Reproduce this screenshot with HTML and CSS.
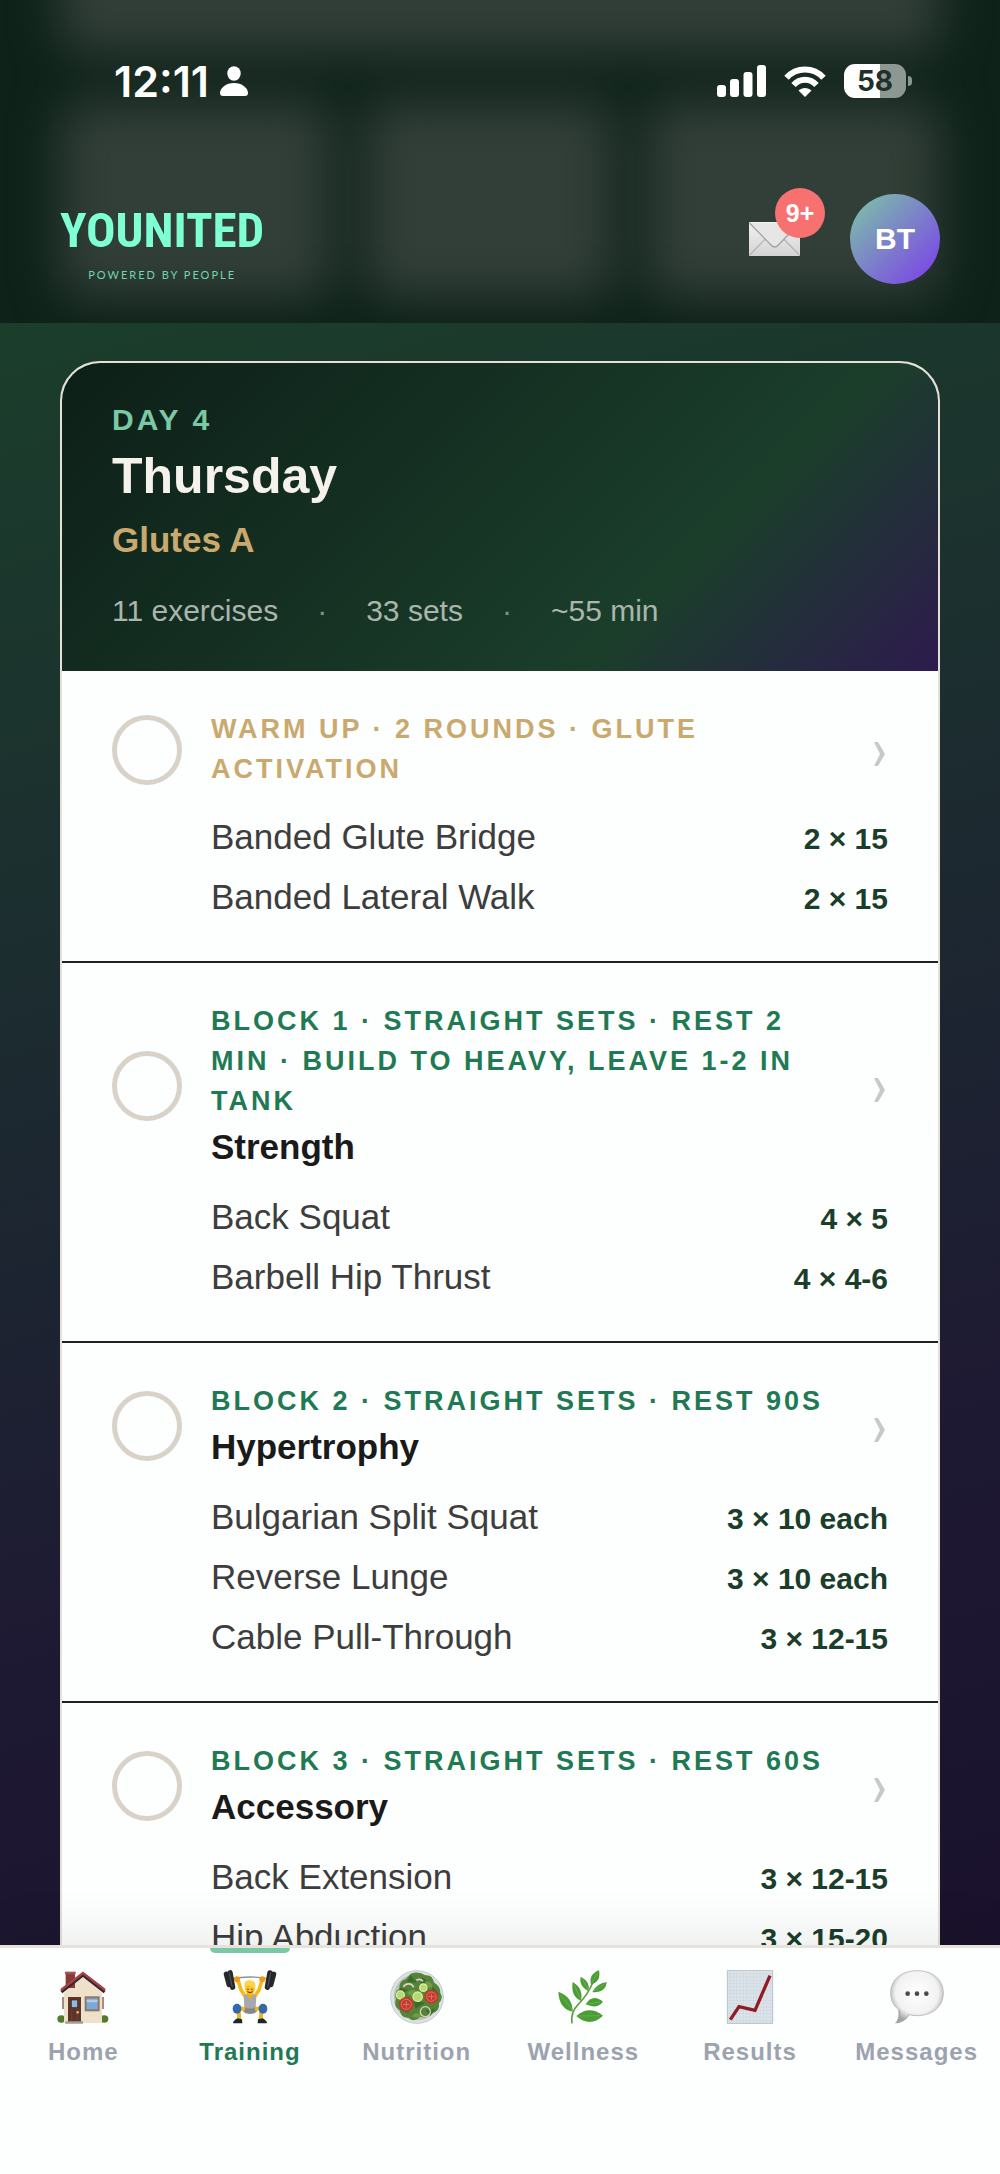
FILE: index.html
```html
<!DOCTYPE html>
<html lang="en">
<head>
    <meta charset="UTF-8">
    <meta name="viewport" content="width=device-width, initial-scale=1.0">
    <title>YOUNITED - Training</title>
    <link rel="stylesheet" href="styles.css">
</head>
<body>
    <header class="top-bar">
        <!-- blurred cards scrolled under the bar -->
        <div class="backdrop" aria-hidden="true">
            <div class="tile wide"></div>
            <div class="tile"></div>
            <div class="tile"></div>
            <div class="tile"></div>
        </div>

        <div class="status-bar">
            <div class="clock">
                <span>12:11</span>
                <svg width="28" height="30" viewBox="0 0 28 30" fill="#fff">
                    <ellipse cx="14" cy="7.5" rx="6.7" ry="7.3"/>
                    <path d="M14 17C6 17 0 22 0 27q0 3 3 3h22q3 0 3-3C28 22 22 17 14 17z"/>
                </svg>
            </div>
            <div class="signals">
                <svg width="49" height="32" viewBox="0 0 49 32" fill="#fff">
                    <rect x="0" y="20" width="9" height="12" rx="3"/>
                    <rect x="13" y="14" width="9" height="18" rx="3"/>
                    <rect x="26.500" y="7" width="9" height="25" rx="3"/>
                    <rect x="40" y="0" width="9" height="32" rx="3"/>
                </svg>
                <svg width="42" height="31" viewBox="0 0 42 31" fill="none" stroke="#fff" stroke-width="6">
                    <path d="M2.500 11.800C12.500 .800 29.500 .800 39.500 11.800"/>
                    <path d="M9.500 19C16 12 26 12 32.500 19"/>
                    <path d="M21 31l-6.500-6.500c3.500-3.400 9.500-3.400 13 0z" fill="#fff" stroke="none"/>
                </svg>
                <div class="battery"><span>58</span></div>
            </div>
        </div>

        <div class="brand-row">
            <a class="logo" href="#">
                <span class="logo-name">YOUNITED</span>
                <span class="logo-tag">POWERED BY PEOPLE</span>
            </a>
            <div class="account">
                <button class="inbox" type="button" aria-label="Inbox">
                    <svg width="51" height="34" viewBox="0 0 153 102">
                        <defs>
                            <linearGradient id="paper" x1="0" y1="0" x2="0" y2="1">
                                <stop offset="0" stop-color="#f1f1f1"/>
                                <stop offset="1" stop-color="#d4d4d4"/>
                            </linearGradient>
                        </defs>
                        <rect width="153" height="102" rx="3" fill="url(#paper)"/>
                        <path d="M3 98L48 52M150 98L105 52" stroke="#b5b5b5" stroke-width="4" fill="none"/>
                        <path d="M2 4L66 69q11 12 22 0L151 4" stroke="#a3a3a3" stroke-width="4" fill="#e6e6e6"/>
                    </svg>
                    <span class="badge">9+</span>
                </button>
                <button class="avatar" type="button">BT</button>
            </div>
        </div>
    </header>

    <main class="content">
        <article class="day-card">
            <div class="day-head">
                <p class="day-number">DAY 4</p>
                <h1>Thursday</h1>
                <p class="focus">Glutes A</p>
                <p class="meta">
                    <span>11 exercises</span>
                    <span class="dot">·</span>
                    <span>33 sets</span>
                    <span class="dot">·</span>
                    <span>~55 min</span>
                </p>
            </div>

            <section class="block warm-up">
                <div class="block-head">
                    <input type="checkbox" id="warmup">
                    <label for="warmup"><span class="block-label">WARM UP · 2 ROUNDS · GLUTE ACTIVATION</span></label>
                    <svg class="chevron" viewBox="0 0 18 24"><path d="M4 0h4l7 12-7 12H4l6-12z"/></svg>
                </div>
                <ul class="exercises">
                    <li>Banded Glute Bridge <b>2 × 15</b></li>
                    <li>Banded Lateral Walk <b>2 × 15</b></li>
                </ul>
            </section>

            <section class="block">
                <div class="block-head">
                    <input type="checkbox" id="block1">
                    <label for="block1">
                        <span class="block-label">BLOCK 1 · STRAIGHT SETS · REST 2 MIN · BUILD TO HEAVY, LEAVE 1-2 IN TANK</span>
                        <span class="block-title">Strength</span>
                    </label>
                    <svg class="chevron" viewBox="0 0 18 24"><path d="M4 0h4l7 12-7 12H4l6-12z"/></svg>
                </div>
                <ul class="exercises">
                    <li>Back Squat <b>4 × 5</b></li>
                    <li>Barbell Hip Thrust <b>4 × 4-6</b></li>
                </ul>
            </section>

            <section class="block">
                <div class="block-head">
                    <input type="checkbox" id="block2">
                    <label for="block2">
                        <span class="block-label">BLOCK 2 · STRAIGHT SETS · REST 90S</span>
                        <span class="block-title">Hypertrophy</span>
                    </label>
                    <svg class="chevron" viewBox="0 0 18 24"><path d="M4 0h4l7 12-7 12H4l6-12z"/></svg>
                </div>
                <ul class="exercises">
                    <li>Bulgarian Split Squat <b>3 × 10 each</b></li>
                    <li>Reverse Lunge <b>3 × 10 each</b></li>
                    <li>Cable Pull-Through <b>3 × 12-15</b></li>
                </ul>
            </section>

            <section class="block">
                <div class="block-head">
                    <input type="checkbox" id="block3">
                    <label for="block3">
                        <span class="block-label">BLOCK 3 · STRAIGHT SETS · REST 60S</span>
                        <span class="block-title">Accessory</span>
                    </label>
                    <svg class="chevron" viewBox="0 0 18 24"><path d="M4 0h4l7 12-7 12H4l6-12z"/></svg>
                </div>
                <ul class="exercises">
                    <li>Back Extension <b>3 × 12-15</b></li>
                    <li>Hip Abduction <b>3 × 15-20</b></li>
                </ul>
            </section>
        </article>
    </main>

    <nav class="tab-bar">
        <a href="#">
            <svg viewBox="0 0 162 162">
                <ellipse cx="16" cy="147" rx="12" ry="11" fill="#557a2c"/>
                <ellipse cx="145" cy="147" rx="12" ry="11" fill="#557a2c"/>
                <path d="M24 68L81 16l57 52v91H24z" fill="#eee1ca"/>
                <rect x="29" y="8" width="28" height="46" fill="#873a38"/>
                <rect x="27" y="5" width="32" height="8" fill="#a35450"/>
                <path d="M16 66L81 15l65 51" fill="none" stroke="#35292d" stroke-width="9"/>
                <path d="M15 60L81 9l66 51" fill="none" stroke="#a64047" stroke-width="7"/>
                <path d="M21 81v36M141 81v36" stroke="#9b7468" stroke-width="5"/>
                <rect x="36" y="81" width="39" height="75" fill="#5c3429"/>
                <rect x="46" y="90" width="19" height="23" fill="#8ebbe4" stroke="#3f261f" stroke-width="2"/>
                <path d="M47 119v34M64 119v34" stroke="#74473a" stroke-width="2"/>
                <circle cx="65" cy="127" r="4" fill="#e5b75d"/>
                <rect x="89" y="82" width="39" height="39" fill="#79a9d6" stroke="#8e7769" stroke-width="6"/>
                <path d="M92 93h33" stroke="#a9cdea" stroke-width="8"/>
                <path d="M29 154h52v7H27z" fill="#a69a9a"/>
            </svg>
            <span>Home</span>
        </a>
        <a class="active" href="#" aria-current="page">
            <svg viewBox="0 0 162 162">
                <path d="M27 26Q81 16 135 26" fill="none" stroke="#8d9297" stroke-width="4"/>
                <g fill="#27282c">
                    <rect x="6" y="4" width="15" height="48" rx="7" transform="rotate(-15 14 27)"/>
                    <rect x="17" y="0" width="16" height="60" rx="8" transform="rotate(-10 25 30)"/>
                    <rect x="141" y="4" width="15" height="48" rx="7" transform="rotate(15 147 27)"/>
                    <rect x="129" y="0" width="16" height="60" rx="8" transform="rotate(10 136 30)"/>
                </g>
                <path d="M19 8l9 44M143 8l-9 44" stroke="#6c6e73" stroke-width="2"/>
                <path d="M45 30L54 60l16 24M117 30l-9 30-16 24" fill="none" stroke="#f5b918" stroke-width="11"/>
                <circle cx="42" cy="28" r="9" fill="#f29b17"/>
                <circle cx="118" cy="28" r="9" fill="#f29b17"/>
                <path d="M62 76q19-9 38 0l-3 54H65z" fill="#a7a8ad"/>
                <path d="M71 74q10 23 20 0v-9H71z" fill="#efad16"/>
                <path d="M63 110q18 11 36 0l4 14q-22 16-44 0z" fill="#85878e"/>
                <path d="M66 118L46 113l3 36M96 118l20-5-3 36" fill="none" stroke="#f1b419" stroke-width="12"/>
                <ellipse cx="42" cy="116" rx="13" ry="15" fill="#3568a9"/>
                <ellipse cx="120" cy="116" rx="13" ry="15" fill="#3568a9"/>
                <ellipse cx="81" cy="54" rx="15" ry="20" fill="#f8bd1d"/>
                <path d="M64 52q-3-20 14-21 19-2 20 18l-2 5q-13-1-20-9-4 6-12 7z" fill="#ffd34e"/>
                <path d="M73 58h4M85 58h4M73 65q8 6 16 0" stroke="#583214" stroke-width="3" fill="none"/>
                <path d="M43 145l14 3 1 12H31q-4-5 12-15zM119 145l-14 3-1 12h27q4-5-12-15z" fill="#1d2732"/>
            </svg>
            <span>Training</span>
        </a>
        <a href="#">
            <svg viewBox="0 0 162 162">
                <circle cx="81" cy="81" r="79" fill="#dce1e4" stroke="#c2c9cc" stroke-width="3"/>
                <circle cx="81" cy="81" r="70" fill="#b9c4bb"/>
                <path d="M62 11q25-9 44 5 22-2 26 22 20 10 19 31 10 16-4 30 3 24-20 31-17 18-36 10-18 20-36 3-23 1-26-22-19-11-11-34-8-20 10-31-1-24 19-28z" fill="#558438"/>
                <path d="M62 16l18 22-30-3zM96 22l23 16-27 2zM127 48l22 27-23-6zM29 53l26 7-28 15zM71 92l35 6-30 18zM28 118l26-9 2 21zM107 121l29-4-15 20z" fill="#376c2c"/>
                <path d="M51 69q21-22 35 4-12 18-35-4zM104 34q22-3 24 18-17 6-24-18zM66 139q11-17 28-3-8 13-28 3z" fill="#6f9d45"/>
                <path d="M40 51a17 17 0 0 1 31 1M79 31q12-7 20 3" fill="none" stroke="#dfcfc7" stroke-width="5"/>
                <g fill="#b4da70" stroke="#dbe9a3" stroke-width="4">
                    <circle cx="31" cy="75" r="12"/>
                    <circle cx="100" cy="53" r="11"/>
                    <circle cx="83" cy="80" r="14"/>
                </g>
                <circle cx="49" cy="103" r="22" fill="#c0392e"/>
                <circle cx="124" cy="80" r="21" fill="#c0392e"/>
                <g fill="none" stroke="#e0755f" stroke-width="3">
                    <circle cx="49" cy="103" r="15"/>
                    <circle cx="124" cy="80" r="14"/>
                    <path d="M49 93v20M39 103h20M124 71v18M115 80h18"/>
                </g>
                <circle cx="106" cy="125" r="15" fill="none" stroke="#ddd0ba" stroke-width="4"/>
            </svg>
            <span>Nutrition</span>
        </a>
        <a href="#">
            <svg viewBox="0 0 162 162">
                <path d="M48 160Q43 127 66 104 94 76 110 39" fill="none" stroke="#5fa044" stroke-width="5"/>
                <g fill="#4b9e37">
                    <path d="M50 125Q9 116 7 65q43 15 43 60z"/>
                    <path d="M75 93Q43 78 50 36q33 19 25 57z"/>
                    <path d="M97 64Q67 46 74 20q31 16 23 44z"/>
                    <path d="M105 44Q97 13 129 1q7 34-24 43z"/>
                    <path d="M109 66q15-27 44-29-7 34-44 29z"/>
                    <path d="M89 103q21-33 52-8-18 24-52 8z"/>
                    <path d="M61 138q38-34 80-1-39 37-80 1z"/>
                </g>
                <g fill="none" stroke="#74b84c" stroke-width="2">
                    <path d="M48 119L12 73M74 87L54 44M96 58L79 28M107 38l18-30M115 62l31-20M95 102l39-6M68 138l64-1"/>
                </g>
            </svg>
            <span>Wellness</span>
        </a>
        <a href="#">
            <svg viewBox="0 0 162 162">
                <defs>
                    <pattern id="graph" width="10" height="10" patternUnits="userSpaceOnUse">
                        <path d="M0 1h10M1 0v10" stroke="#bac9d7" stroke-width="1"/>
                    </pattern>
                </defs>
                <rect x="12" y="1" width="138" height="160" fill="#dce3e9"/>
                <rect x="12" y="1" width="138" height="160" fill="url(#graph)"/>
                <path d="M13 1v159h136V1z" fill="none" stroke="#b8c3cb" stroke-width="3"/>
                <path d="M22 149l26-39 48 11 45-104" fill="none" stroke="#911c25" stroke-width="10"/>
            </svg>
            <span>Results</span>
        </a>
        <a href="#">
            <svg viewBox="0 0 162 162">
                <defs>
                    <radialGradient id="bubble" cx=".5" cy=".42" r=".58">
                        <stop offset="0" stop-color="#fff"/>
                        <stop offset=".7" stop-color="#f2f2f2"/>
                        <stop offset="1" stop-color="#a2a2a2"/>
                    </radialGradient>
                </defs>
                <path d="M25 119q4 26-10 41 28-1 43-25z" fill="#a0a0a0"/>
                <path d="M81 2c48 0 79 27 79 67s-32 68-79 68q-12 0-24-3-11 18-37 25 12-15 9-38C10 108 2 91 2 69 2 29 34 2 81 2z" fill="url(#bubble)" stroke="#a9a9a9" stroke-width="2"/>
                <g fill="#4b4b4b">
                    <circle cx="53" cy="71" r="7"/>
                    <circle cx="81" cy="71" r="7"/>
                    <circle cx="109" cy="71" r="7"/>
                </g>
            </svg>
            <span>Messages</span>
        </a>
    </nav>
</body>
</html>
```

FILE: styles.css
```css
* {
    box-sizing: border-box;
    margin: 0;
    padding: 0;
}
body {
    display: flex;
    flex-direction: column;
    height: 100vh;
    font-family: Arial, "Liberation Sans", sans-serif;
    background: #1a122c;
}
a {
    text-decoration: none;
}
button {
    border: none;
    background: none;
    font-family: inherit;
    cursor: pointer;
}
ul {
    list-style: none;
}

/* header */
.top-bar {
    position: relative;
    flex: none;
    overflow: hidden;
    padding: 60px 60px 39px;
    background: #0e2219;
}
.backdrop {
    position: absolute;
    inset: -60px 60px 26px;
    display: grid;
    grid-template-columns: 12fr 11fr 13fr;
    grid-template-rows: 112px 1fr;
    gap: 50px 34px;
    filter: blur(24px);
}
.tile {
    background: #323f38;
    border-radius: 20px;
}
.tile.wide {
    grid-column: 1 / -1;
}
.status-bar {
    position: relative;
    display: flex;
    justify-content: space-between;
    align-items: center;
    height: 42px;
    padding: 0 34px 0 54px;
    font-family: Inter, sans-serif;
    color: #fff;
}
.clock {
    display: flex;
    align-items: center;
    gap: 11px;
    font-size: 43px;
    font-weight: 600;
}
.signals {
    display: flex;
    align-items: center;
    gap: 18px;
}
.battery {
    position: relative;
    width: 62px;
    height: 34px;
    border-radius: 11px;
    background: linear-gradient(90deg, #fff 58%, #8e9892 58%);
    color: #1f312a;
    font-size: 28px;
    font-weight: 700;
    line-height: 34px;
    text-align: center;
}
.battery::after {
    content: "";
    position: absolute;
    right: -6px;
    top: 12px;
    width: 4px;
    height: 10px;
    border-radius: 0 4px 4px 0;
    background: #8e9892;
}
.brand-row {
    position: relative;
    display: flex;
    justify-content: space-between;
    align-items: center;
    margin-top: 92px;
}
.logo {
    display: flex;
    flex-direction: column;
    align-items: center;
    color: #7fffd4;
}
.logo-name {
    font-family: "Roboto Condensed", "Liberation Sans Narrow", "Liberation Sans", sans-serif;
    font-size: 49px;
    font-weight: 700;
    line-height: 72px;
}
.logo-tag {
    font-family: Lato, sans-serif;
    font-size: 11px;
    line-height: 16px;
    letter-spacing: 2px;
    color: #6fd6b0;
}
.account {
    display: flex;
    align-items: center;
    gap: 50px;
}
.inbox {
    position: relative;
    height: 34px;
}
.inbox svg {
    display: block;
}
.badge {
    position: absolute;
    right: -25px;
    bottom: 18px;
    width: 50px;
    height: 50px;
    border-radius: 50%;
    background: #f87171;
    color: #fff;
    font-size: 25px;
    font-weight: 700;
    line-height: 50px;
    text-align: center;
}
.avatar {
    width: 90px;
    height: 90px;
    border-radius: 50%;
    background: linear-gradient(135deg, #7bc8a4, #7c3aed);
    color: #fff;
    font-size: 30px;
    font-weight: 700;
}

/* training day */
.content {
    flex: 1;
    min-height: 0;
    overflow: hidden;
    padding: 38px 60px 0;
    background: linear-gradient(165deg, #1b3e2b 0%, #1c2b30 38%, #1e1933 72%, #1a122c 100%);
}
.day-card {
    overflow: hidden;
    border: 2px solid #e5e0d6;
    border-radius: 40px;
    background: #fdfefe;
}
.day-head {
    padding: 40px 50px 42px;
    background: linear-gradient(135deg, #0d1f18 0%, #1b3e2b 70%, #2d1b4e 100%);
}
.day-number {
    font-size: 30px;
    font-weight: 700;
    line-height: 34px;
    letter-spacing: 3px;
    color: #7bc8a4;
}
.day-head h1 {
    margin-top: 8px;
    font-size: 50px;
    line-height: 62px;
    color: #f5f1eb;
}
.focus {
    margin-top: 12px;
    font-size: 35px;
    font-weight: 700;
    line-height: 42px;
    color: #c9a96e;
}
.meta {
    display: flex;
    gap: 39px;
    margin-top: 32px;
    font-size: 30px;
    line-height: 36px;
    color: #a9b5ad;
}
.dot {
    color: #7f9287;
}
.block {
    padding: 38px 50px;
    border-bottom: 2px solid #1c2220;
}
.block-head {
    display: flex;
    align-items: center;
    gap: 29px;
}
.block-head input {
    flex: none;
    appearance: none;
    width: 70px;
    height: 70px;
    border: 5px solid #d8d2c8;
    border-radius: 50%;
}
.block-head label {
    flex: 1;
}
.block-label {
    display: block;
    margin-bottom: 2px;
    font-size: 27px;
    font-weight: 700;
    line-height: 40px;
    letter-spacing: 3px;
    color: #1f7a54;
}
.warm-up .block-label {
    color: #c9a96e;
}
.block-title {
    display: block;
    font-size: 35px;
    font-weight: 700;
    line-height: 48px;
    color: #1a1a1a;
}
.chevron {
    flex: none;
    width: 18px;
    height: 24px;
    margin-top: 8px;
    fill: #c8c8c8;
}
.exercises {
    display: flex;
    flex-direction: column;
    gap: 8px;
    margin: 20px 0 0 99px;
}
.exercises li {
    display: flex;
    justify-content: space-between;
    align-items: baseline;
    font-size: 35px;
    line-height: 52px;
    color: #3d3d3d;
}
.exercises b {
    font-size: 30px;
    line-height: 36px;
    color: #1b3e2b;
}

/* bottom tabs */
.tab-bar {
    position: relative;
    flex: none;
    display: grid;
    grid-template-columns: repeat(6, 1fr);
    padding-bottom: 107px;
    border-top: 3px solid #e8e2dc;
    background: #fdfefe;
    box-shadow: 0 -10px 50px rgba(0, 0, 0, 0.08);
}
.tab-bar a {
    position: relative;
    display: flex;
    flex-direction: column;
    align-items: center;
    gap: 13px;
    padding-top: 22px;
    font-size: 24px;
    font-weight: 700;
    line-height: 30px;
    letter-spacing: 1px;
    color: #9ca3af;
}
.tab-bar svg {
    width: 54px;
    height: 54px;
}
.tab-bar a.active {
    color: #1f7a54;
}
.tab-bar a.active::before {
    content: "";
    position: absolute;
    top: 0;
    width: 80px;
    height: 5px;
    border-radius: 0 0 5px 5px;
    background: #7bc8a4;
}
```
